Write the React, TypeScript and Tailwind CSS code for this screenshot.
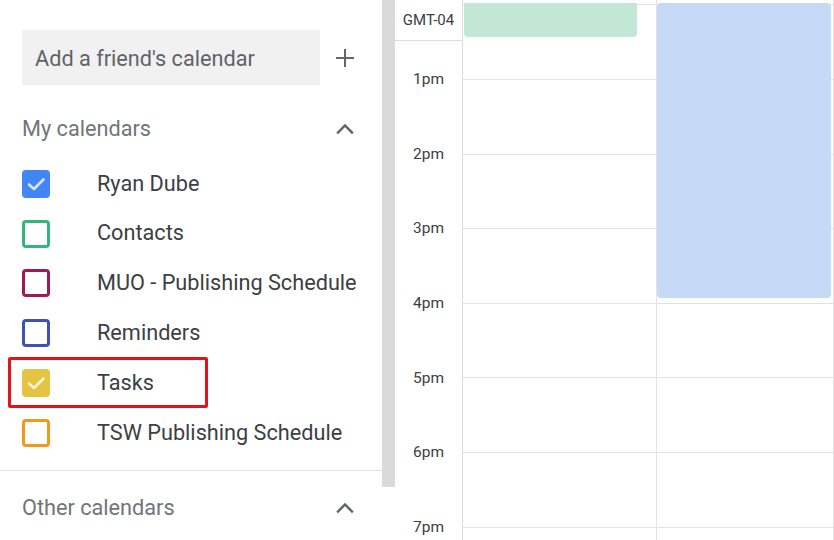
import React from "react";

const items = [
  { name: "Ryan Dube", color: "#4285f4", checked: true },
  { name: "Contacts", color: "#33b679", checked: false },
  { name: "MUO - Publishing Schedule", color: "#a11a58", checked: false },
  { name: "Reminders", color: "#3f51b5", checked: false },
  { name: "Tasks", color: "#e4c441", checked: true, highlight: true },
  { name: "TSW Publishing Schedule", color: "#ee9a1a", checked: false },
];

const hours = ["1pm", "2pm", "3pm", "4pm", "5pm", "6pm", "7pm"];

function ChevronUp() {
  return (
    <svg width="20" height="20" viewBox="0 0 20 20" fill="none">
      <path d="M3 13.5 L10 6.5 L17 13.5" stroke="#5f6368" strokeWidth="2.4" strokeLinecap="square" />
    </svg>
  );
}

function Box({ color, checked }: { color: string; checked: boolean }) {
  if (checked) {
    return (
      <div className="w-[28px] h-[28px] rounded-[4px] flex items-center justify-center" style={{ backgroundColor: color }}>
        <svg width="28" height="28" viewBox="0 0 28 28" fill="none">
          <path d="M7 14.5 L12 19 L21.5 9.5" stroke="rgba(255,255,255,0.8)" strokeWidth="2.6" strokeLinecap="round" strokeLinejoin="round" />
        </svg>
      </div>
    );
  }
  return <div className="w-[28px] h-[28px] rounded-[4px] border-[3px]" style={{ borderColor: color }} />;
}

export default function App() {
  return (
    <div className="w-[834px] h-[540px] flex overflow-hidden bg-white" style={{ fontFamily: "Roboto, 'Noto Sans', Arial, sans-serif" }}>
      {/* Sidebar */}
      <div className="w-[382px] shrink-0 flex flex-col pt-[30px]">
        <div className="flex items-center shrink-0">
          <div className="ml-[22px] w-[298px] h-[55px] bg-[#f1f1f1] flex items-center pl-[13px] pt-[3px] text-[21.7px] text-[#5f6368]">
            Add a friend's calendar
          </div>
          <div className="ml-[15px] w-[20px] h-[20px] flex items-center justify-center">
            <svg width="20" height="20" viewBox="0 0 20 20" fill="none">
              <path d="M10 1 V19 M1 10 H19" stroke="#666" strokeWidth="2" />
            </svg>
          </div>
        </div>
        <div className="mt-[19px] h-[50px] shrink-0 flex items-center justify-between pl-[22px] pr-[27px]">
          <span className="text-[21.7px] text-[#70757a]">My calendars</span>
          <ChevronUp />
        </div>
        <div className="mt-[5px] flex flex-col shrink-0">
          {items.map((it) => (
            <div key={it.name} className="relative h-[49.8px] flex items-center pl-[22px]">
              <Box color={it.color} checked={it.checked} />
              <span className="ml-[47px] text-[21.7px] text-[#3c4043] whitespace-nowrap">{it.name}</span>
              {it.highlight && (
                <div className="absolute left-[8px] top-[-1px] w-[200px] h-[51px] border-[3px] border-[#e2131b] rounded-[2px]" />
              )}
            </div>
          ))}
        </div>
        <div className="mt-[12px] border-t border-[#e0e0e0] shrink-0" />
        <div className="mt-[12px] h-[50px] shrink-0 flex items-center justify-between pl-[22px] pr-[27px]">
          <span className="text-[21.7px] text-[#70757a]">Other calendars</span>
          <ChevronUp />
        </div>
      </div>

      {/* Scrollbar */}
      <div className="w-[13px] shrink-0">
        <div className="h-[487px] bg-[#dadada]" />
      </div>

      {/* Time gutter */}
      <div className="w-[68px] shrink-0 border-r border-[#dadce0] flex flex-col">
        <div className="h-[41px] shrink-0 border-b border-[#dadce0] flex items-center justify-center text-[15px] text-[#3c4043]">
          GMT-04
        </div>
        <div className="flex flex-col shrink-0">
          <div className="h-[1.5px] shrink-0" />
          {hours.map((h) => (
            <div key={h} className="h-[74.6px] shrink-0 flex items-center justify-center text-[15.5px] text-[#3c4043]">
              {h}
            </div>
          ))}
        </div>
      </div>

      {/* Grid */}
      <div className="relative flex-1 flex flex-col">
        <div className="h-[5px] flex shrink-0">
          <div className="w-[194px] border-b border-r border-[#e3e3e3]" />
          <div className="flex-1 border-b border-r border-[#e3e3e3]" />
        </div>
        <div className="h-[75px] flex shrink-0">
          <div className="w-[194px] border-b border-r border-[#e3e3e3]" />
          <div className="flex-1 border-b border-r border-[#e3e3e3]" />
        </div>
        {[0, 1, 2, 3, 4, 5, 6].map((i) => (
          <div key={i} className="h-[74.6px] flex shrink-0">
            <div className="w-[194px] border-b border-r border-[#e3e3e3]" />
            <div className="flex-1 border-b border-r border-[#e3e3e3]" />
          </div>
        ))}
        <div className="absolute left-[1px] top-[3px] w-[173px] h-[34px] bg-[#c2e7d5] rounded-b-[4px]" />
        <div className="absolute left-[194px] top-[3px] w-[174px] h-[295px] bg-[#c6d9f7] rounded-[4px]" />
      </div>
    </div>
  );
}
